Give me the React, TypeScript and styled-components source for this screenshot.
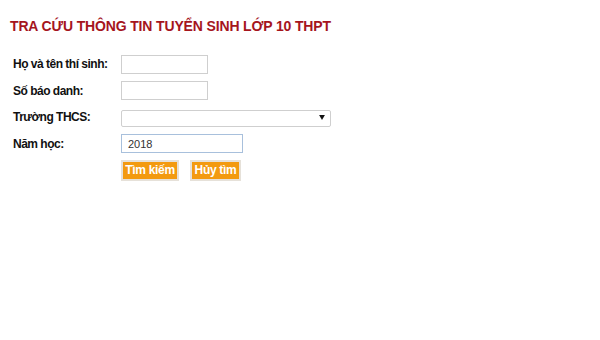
import React from "react";
import styled, { createGlobalStyle } from "styled-components";

const GlobalStyle = createGlobalStyle`
  html, body {
    margin: 0;
    padding: 0;
    background: #fff;
  }
  body {
    font-family: "Liberation Sans", Arial, sans-serif;
    color: #000;
  }
`;

export default function App() {
  return (
    <>
      <GlobalStyle />
      <Page>
        <Title>TRA CỨU THÔNG TIN TUYỂN SINH LỚP 10 THPT</Title>
        <Form>
          <Label>Họ và tên thí sinh:</Label>
          <Field>
            <TextInput width={87} />
          </Field>
          <Label>Số báo danh:</Label>
          <Field>
            <TextInput width={87} />
          </Field>
          <Label>Trường THCS:</Label>
          <Field>
            <SelectWrap>
              <Select defaultValue="">
                <option value=""></option>
              </Select>
              <Arrow viewBox="0 0 7 6">
                <path d="M0 0h7L3.5 6z" fill="#111" />
              </Arrow>
            </SelectWrap>
          </Field>
          <Label>Năm học:</Label>
          <Field>
            <TextInput width={122} accent defaultValue="2018" />
          </Field>
          <span />
          <Buttons>
            <Button width={58}>Tìm kiếm</Button>
            <Button width={51}>Hủy tìm</Button>
          </Buttons>
        </Form>
      </Page>
    </>
  );
}

const Page = styled.div`
  width: 600px;
  height: 340px;
  padding: 18px 0 0 10px;
  box-sizing: border-box;
`;

const Title = styled.h1`
  margin: 0 0 17px;
  font-size: 14px;
  line-height: 16px;
  font-weight: bold;
  color: #a5151d;
  letter-spacing: -0.15px;
`;

const Form = styled.div`
  display: grid;
  grid-template-columns: 108px auto;
  grid-auto-rows: 26.5px;
  padding-left: 3px;
  align-items: center;
`;

const Label = styled.div`
  font-size: 12px;
  font-weight: bold;
  color: #111;
  letter-spacing: -0.5px;
`;

const Field = styled.div`
  display: flex;
  align-items: center;
`;

const TextInput = styled.input<{ width: number; accent?: boolean }>`
  width: ${(p) => p.width}px;
  height: 19px;
  box-sizing: border-box;
  border: 1px solid ${(p) => (p.accent ? "#a8c0dc" : "#cfcfcf")};
  padding: 0 6px;
  font-family: "Liberation Sans", Arial, sans-serif;
  font-size: 11px;
  color: #333;
  outline: none;
  background: #fff;
`;

const SelectWrap = styled.div`
  position: relative;
  width: 210px;
  height: 17px;
`;

const Select = styled.select`
  appearance: none;
  width: 100%;
  height: 100%;
  box-sizing: border-box;
  border: 1px solid #cfcfcf;
  border-radius: 2px;
  background: #fff;
  font-family: "Liberation Sans", Arial, sans-serif;
  font-size: 11px;
  outline: none;
`;

const Arrow = styled.svg`
  position: absolute;
  right: 6px;
  top: 6px;
  width: 6px;
  height: 5px;
  pointer-events: none;
`;

const Buttons = styled.div`
  display: flex;
  gap: 11px;
`;

const Button = styled.button<{ width: number }>`
  width: ${(p) => p.width}px;
  height: 21px;
  box-sizing: border-box;
  padding: 0;
  background: #f39a10;
  border: 2px solid #e6e1d9;
  color: #fff;
  font-family: "Liberation Sans", Arial, sans-serif;
  font-size: 12px;
  font-weight: bold;
  letter-spacing: -0.3px;
  cursor: pointer;
`;
